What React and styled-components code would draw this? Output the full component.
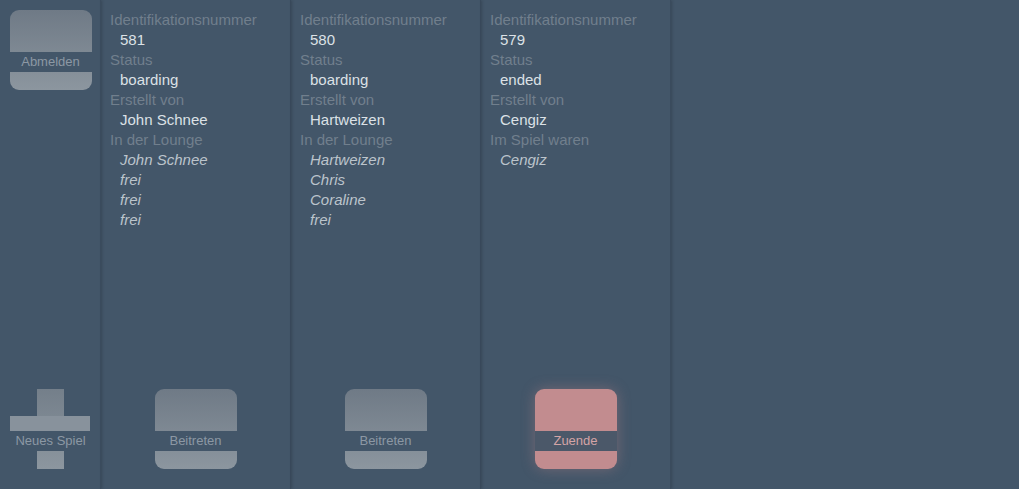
import React from 'react'
import styled, { createGlobalStyle, css } from 'styled-components';

const Global = createGlobalStyle`
  html, body {
    margin: 0;
    padding: 0;
    height: 100%;
    background: #435669;
  }
  #root {
    height: 100%;
  }
`;

const Page = styled.div`
  display: flex;
  height: 100vh;
  background: #435669;
  font-family: 'Liberation Sans', Arial, sans-serif;
  overflow: hidden;
`;

const Sidebar = styled.div`
  width: 101px;
  flex: none;
  display: flex;
  flex-direction: column;
  justify-content: space-between;
  align-items: center;
  padding: 10px 0 20px 1px;
  box-sizing: border-box;
  border-right: 1px solid #3a4b5d;
  box-shadow: 1px 0 3px rgba(0, 0, 0, 0.18);
  position: relative;
  z-index: 2;
`;

const Column = styled.div`
  width: 190px;
  flex: none;
  display: flex;
  flex-direction: column;
  padding: 10px 0 20px 9px;
  box-sizing: border-box;
  border-right: 1px solid #3a4b5d;
  box-shadow: 1px 0 3px rgba(0, 0, 0, 0.18);
  position: relative;
`;

const Label = styled.div`
  font-size: 15px;
  line-height: 20px;
  color: #717f8d;
`;

const Value = styled.div`
  font-size: 15px;
  line-height: 20px;
  padding-left: 10px;
  color: ${p => (p.$italic ? '#bcc4cc' : '#dce1e6')};
  font-style: ${p => (p.$italic ? 'italic' : 'normal')};
`;

const Footer = styled.div`
  margin-top: auto;
  display: flex;
  justify-content: center;
  padding-right: 9px;
`;

const Button = styled.div`
  width: 82px;
  height: 80px;
  position: relative;
  border-radius: 9px;
  overflow: hidden;
  background: linear-gradient(#6f7a86, #8c969f);
  cursor: pointer;
  ${p => p.$danger && css`
    background: #c28c8f;
    box-shadow: 0 0 14px rgba(210, 140, 140, 0.35);
  `}
`;

const Strip = styled.div`
  position: absolute;
  left: 0;
  right: 0;
  top: 42px;
  height: 20px;
  z-index: 1;
  background: ${p => (p.$danger ? '#4b5869' : '#435669')};
  font-size: 13px;
  line-height: 20px;
  text-align: center;
  color: ${p => (p.$danger ? '#d4a4a6' : '#8c98a4')};
`;

const Plus = styled.div`
  width: 82px;
  height: 80px;
  position: relative;
  cursor: pointer;
  &::before {
    content: '';
    position: absolute;
    left: 27px;
    width: 27px;
    top: 0;
    bottom: 0;
    background: linear-gradient(#747f8a, #8c969f);
  }
  &::after {
    content: '';
    position: absolute;
    left: 0;
    right: 2px;
    top: 27px;
    height: 30px;
    background: #88929c;
  }
`;

const ActionButton = ({ label, danger }) => (
  <Button $danger={danger}>
    <Strip $danger={danger}>{label}</Strip>
  </Button>
);

const games = [
  {
    id: 581,
    status: 'boarding',
    creator: 'John Schnee',
    listLabel: 'In der Lounge',
    players: ['John Schnee', 'frei', 'frei', 'frei'],
    action: 'Beitreten',
  },
  {
    id: 580,
    status: 'boarding',
    creator: 'Hartweizen',
    listLabel: 'In der Lounge',
    players: ['Hartweizen', 'Chris', 'Coraline', 'frei'],
    action: 'Beitreten',
  },
  {
    id: 579,
    status: 'ended',
    creator: 'Cengiz',
    listLabel: 'Im Spiel waren',
    players: ['Cengiz'],
    action: 'Zuende',
    danger: true,
  },
];

const GameColumn = ({ game }) => (
  <Column>
    <Label>Identifikationsnummer</Label>
    <Value>{game.id}</Value>
    <Label>Status</Label>
    <Value>{game.status}</Value>
    <Label>Erstellt von</Label>
    <Value>{game.creator}</Value>
    <Label>{game.listLabel}</Label>
    {game.players.map((p, i) => (
      <Value key={i} $italic>{p}</Value>
    ))}
    <Footer>
      <ActionButton label={game.action} danger={game.danger} />
    </Footer>
  </Column>
);

const App = () => (
  <Page>
    <Global />
    <Sidebar>
      <ActionButton label="Abmelden" />
      <Plus>
        <Strip>Neues Spiel</Strip>
      </Plus>
    </Sidebar>
    {games.map(g => (
      <GameColumn key={g.id} game={g} />
    ))}
  </Page>
);

export default App
